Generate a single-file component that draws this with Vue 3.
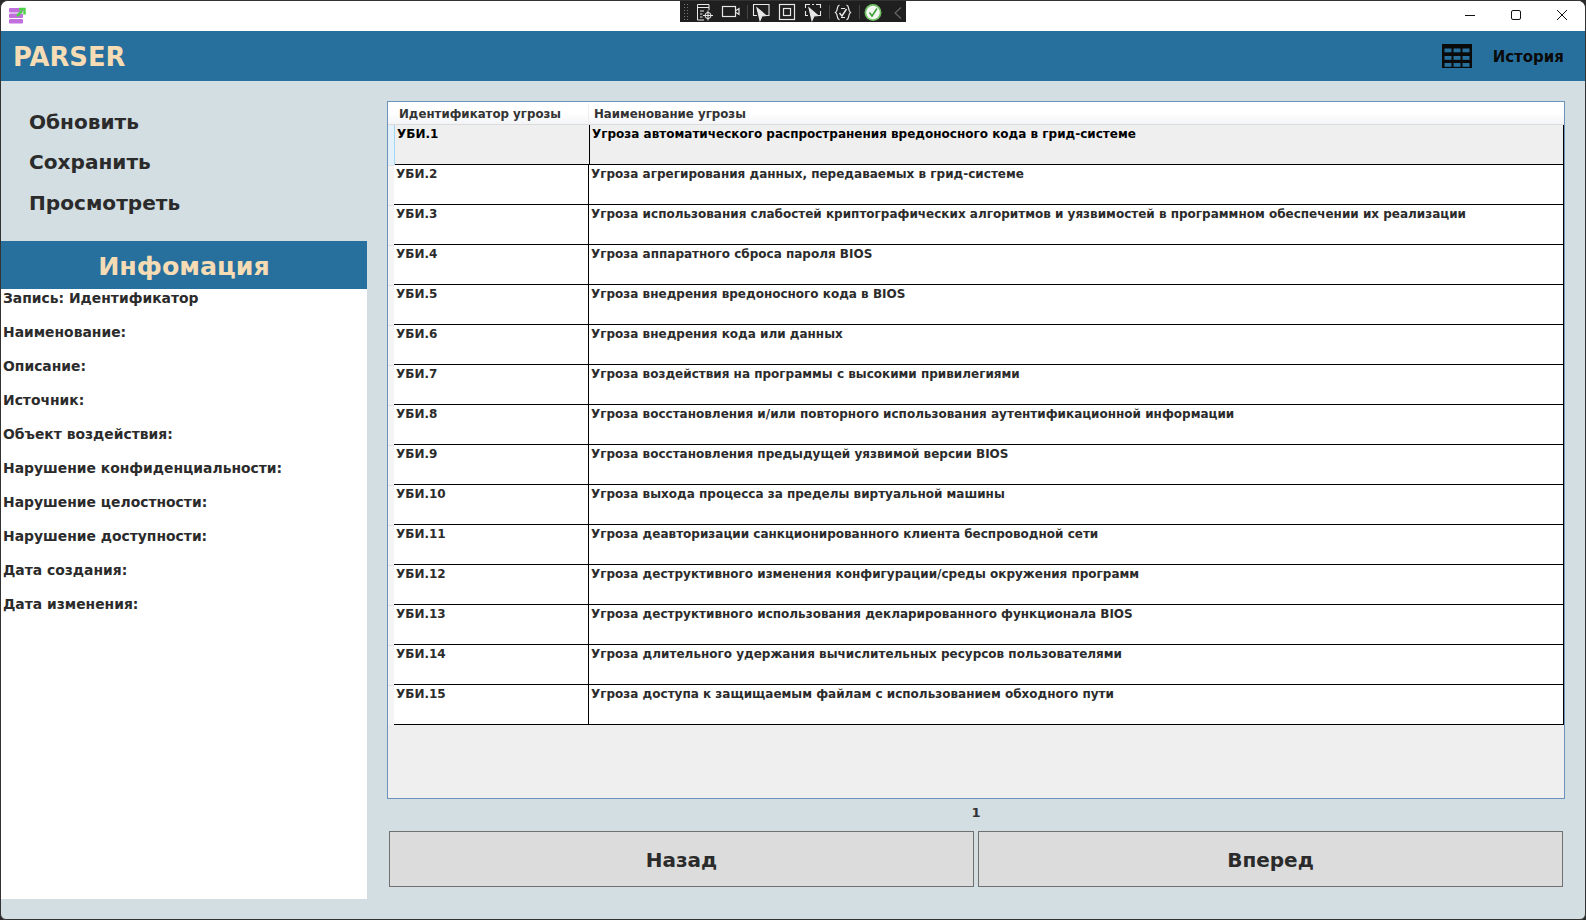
<template>
  <div class="window">
    <div class="titlebar">
      <svg class="app-icon" width="18" height="18" viewBox="0 0 18 18">
        <rect x="0" y="1" width="14" height="4.5" rx="1" fill="#c06fdc" />
        <rect x="0" y="6.500" width="14" height="4.500" rx="1" fill="#c06fdc" />
        <rect x="0" y="12" width="14" height="4.500" rx="1" fill="#c06fdc" />
        <path d="M8 9L13 4M10 2H15.500V7.500" fill="none" stroke="#4fd24a" stroke-width="2.500" />
      </svg>
      <div class="devbar">
        <span class="grip"></span>
        <svg width="20" height="20" viewBox="0 0 20 20" fill="none" stroke="#e8e8e8" stroke-width="1">
          <path d="M10 18H3.500V2.500H15V8" />
          <path d="M3.500 5.500H15M6 9H10M6 12H8.500M6 15H8.500" />
          <circle cx="14" cy="13.500" r="3" />
          <path d="M14 8.500V18.500M9 13.500H19" />
        </svg>
        <svg class="wide" width="21" height="20" viewBox="0 0 21 20" fill="none" stroke="#e8e8e8" stroke-width="1.200">
          <rect x="2.500" y="4.500" width="13" height="10" />
          <path d="M16 8.500L19 6.500V12.500L16 10.500" />
        </svg>
        <i class="sep"></i>
        <svg width="20" height="20" viewBox="0 0 20 20" fill="none" stroke="#e8e8e8" stroke-width="1.100">
          <path d="M6 13.500H2.500V2.500H18V13.500H14" />
          <path d="M6 6L15 13.500L11 14L9 18.500Z" fill="#e8e8e8" />
        </svg>
        <svg width="20" height="20" viewBox="0 0 20 20" fill="none" stroke="#e8e8e8" stroke-width="1.200">
          <rect x="2.500" y="2.500" width="15" height="15" />
          <rect x="6.500" y="6.500" width="7" height="7" />
        </svg>
        <svg width="20" height="20" viewBox="0 0 20 20" fill="none" stroke="#e8e8e8" stroke-width="1.100">
          <path d="M2.500 6V2.500H7M2.500 9V13.500H5M13 2.500H17.500V6M17.500 9V13.500H15M9 2.500H11" />
          <path d="M6 6L15 13.500L11 14L9 18.500Z" fill="#e8e8e8" />
        </svg>
        <i class="sep"></i>
        <svg width="20" height="20" viewBox="0 0 20 20" fill="none" stroke="#e8e8e8" stroke-width="1.200">
          <path d="M6.500 3C3 4 5.500 8.500 2.500 10.500C5.500 12.500 3 17 6.500 18M13.500 3C17 4 14.500 8.500 17.500 10.500C14.500 12.500 17 17 13.500 18" />
          <path d="M6.500 11L9 14L13.500 7" stroke-width="1.500" />
          <path d="M8 6.500H12M8 15.500H12" stroke-width="1" />
        </svg>
        <i class="sep"></i>
        <svg width="20" height="20" viewBox="0 0 20 20">
          <circle cx="10" cy="10.500" r="8.500" fill="#6fbf63" />
          <circle cx="10" cy="10.500" r="6.800" fill="#f4f8f2" />
          <path d="M6.500 10.500L9 14L14 6.500" fill="none" stroke="#3f9f3a" stroke-width="1.600" />
        </svg>
        <svg class="chevron" width="14" height="20" viewBox="0 0 14 20" fill="none" stroke="#666" stroke-width="1.200">
          <path d="M10 5.500L4 11L10 16.500" />
        </svg>
      </div>
      <div class="controls">
        <svg width="12" height="12" viewBox="0 0 12 12"><path d="M1 6.500H11" stroke="#111" /></svg>
        <svg width="12" height="12" viewBox="0 0 12 12" fill="none"><rect x="1.500" y="1.500" width="9" height="9" rx="1.500" stroke="#111" /></svg>
        <svg width="12" height="12" viewBox="0 0 12 12"><path d="M1 1L11 11M11 1L1 11" stroke="#111" /></svg>
      </div>
    </div>

    <header class="topbar">
      <span class="logo">PARSER</span>
      <div class="history">
        <svg width="30" height="24" viewBox="0 0 30 24">
          <rect width="30" height="24" fill="#0a0a0a" />
          <g fill="#27709e">
            <rect v-for="c in gridCells" :key="c.x + '-' + c.y" :x="c.x" :y="c.y" width="7" height="3.800" />
          </g>
        </svg>
        <span>История</span>
      </div>
    </header>

    <main class="body">
      <aside class="side">
        <nav class="menu">
          <a v-for="m in menu" :key="m">{{ m }}</a>
        </nav>
        <h2 class="info-title">Инфомация</h2>
        <div class="info">
          <p v-for="f in fields" :key="f">{{ f }}</p>
        </div>
      </aside>

      <section class="content">
        <div class="table-box">
          <div class="thead">
            <span class="th th-id">Идентификатор угрозы</span>
            <span class="th th-name">Наименование угрозы</span>
          </div>
          <div
            v-for="(row, i) in rows"
            :key="row[0]"
            class="tr"
            :class="{ selected: i === 0 }"
          >
            <span class="gutter"></span>
            <span class="td td-id">{{ row[0] }}</span>
            <span class="td td-name">{{ row[1] }}</span>
          </div>
        </div>
        <div class="page">1</div>
        <div class="buttons">
          <button>Назад</button>
          <button>Вперед</button>
        </div>
      </section>
    </main>
  </div>
</template>

<script setup>
const menu = ['Обновить', 'Сохранить', 'Просмотреть']

const fields = [
  'Запись: Идентификатор',
  'Наименование:',
  'Описание:',
  'Источник:',
  'Объект воздействия:',
  'Нарушение конфиденциальности:',
  'Нарушение целостности:',
  'Нарушение доступности:',
  'Дата создания:',
  'Дата изменения:',
]

const rows = [
  ['УБИ.1', 'Угроза автоматического распространения вредоносного кода в грид-системе'],
  ['УБИ.2', 'Угроза агрегирования данных, передаваемых в грид-системе'],
  ['УБИ.3', 'Угроза использования слабостей криптографических алгоритмов и уязвимостей в программном обеспечении их реализации'],
  ['УБИ.4', 'Угроза аппаратного сброса пароля BIOS'],
  ['УБИ.5', 'Угроза внедрения вредоносного кода в BIOS'],
  ['УБИ.6', 'Угроза внедрения кода или данных'],
  ['УБИ.7', 'Угроза воздействия на программы с высокими привилегиями'],
  ['УБИ.8', 'Угроза восстановления и/или повторного использования аутентификационной информации'],
  ['УБИ.9', 'Угроза восстановления предыдущей уязвимой версии BIOS'],
  ['УБИ.10', 'Угроза выхода процесса за пределы виртуальной машины'],
  ['УБИ.11', 'Угроза деавторизации санкционированного клиента беспроводной сети'],
  ['УБИ.12', 'Угроза деструктивного изменения конфигурации/среды окружения программ'],
  ['УБИ.13', 'Угроза деструктивного использования декларированного функционала BIOS'],
  ['УБИ.14', 'Угроза длительного удержания вычислительных ресурсов пользователями'],
  ['УБИ.15', 'Угроза доступа к защищаемым файлам с использованием обходного пути'],
]

// ячейки иконки таблицы
const gridCells = []
for (const y of [4.5, 12, 19]) {
  for (const x of [2.5, 11.5, 20.5]) {
    gridCells.push({ x, y })
  }
}
</script>

<style>
html, body {
  margin: 0;
  background: #2a2a2a;
}
</style>

<style scoped>
.window {
  width: 1586px;
  height: 920px;
  box-sizing: border-box;
  border: 1px solid #333;
  border-radius: 8px 8px 6px 6px;
  overflow: hidden;
  display: flex;
  flex-direction: column;
  background: #d3dee3;
  font-family: "DejaVu Sans", sans-serif;
  font-weight: bold;
  color: #2b2b2b;
}

.titlebar {
  height: 30px;
  flex: none;
  background: #fff;
  display: flex;
  align-items: center;
  position: relative;
  padding-left: 8px;
}
.app-icon {
  margin-bottom: 1px;
}
.devbar {
  position: absolute;
  left: 679px;
  top: 0;
  width: 226px;
  height: 21px;
  box-sizing: border-box;
  background: #1f1f1f;
  display: flex;
  align-items: center;
  gap: 6px;
  padding-left: 3px;
}
.grip {
  width: 5px;
  height: 17px;
  background: radial-gradient(#777 40%, transparent 45%) 0 0 / 3px 3px;
}
.sep {
  width: 1px;
  height: 14px;
  background: #444;
  margin-right: -3px;
}
.chevron {
  margin-left: 2px;
}
.controls {
  margin-left: auto;
  display: flex;
  gap: 34px;
  padding: 0 17px 2px 0;
}

.topbar {
  height: 50px;
  flex: none;
  background: #27709e;
  display: flex;
  align-items: center;
  justify-content: space-between;
  padding: 0 21px 0 12px;
}
.logo {
  font-size: 25.800px;
  color: #f5dcb4;
  padding-top: 2px;
}
.history {
  display: flex;
  align-items: center;
  gap: 21px;
  font-size: 15px;
  color: #0a0a0a;
}
.history span {
  padding-top: 1px;
}

.body {
  flex: 1;
  display: flex;
  min-height: 0;
}

.side {
  width: 366px;
  flex: none;
  display: flex;
  flex-direction: column;
  margin-bottom: 20px;
}
.menu {
  display: flex;
  flex-direction: column;
  padding: 27px 0 0 28px;
  height: 135px;
  box-sizing: border-box;
  gap: 12.300px;
  margin-bottom: 25px;
  font-size: 20.100px;
  line-height: 28px;
}
.info-title {
  margin: 0;
  height: 48px;
  background: #27709e;
  color: #f5dcb4;
  font-size: 25.300px;
  line-height: 51px;
  text-align: center;
}
.info {
  flex: 1;
  background: #fff;
  padding: 1px 2px 0;
  font-size: 13.900px;
}
.info p {
  margin: 0 0 17px;
  line-height: 17px;
}

.content {
  flex: 1;
  min-width: 0;
  padding: 20px 20px 0;
  display: flex;
  flex-direction: column;
}
.table-box {
  height: 698px;
  box-sizing: border-box;
  border: 1px solid #6b92bd;
  background: #efefef;
  font-size: 12px;
}
.thead {
  height: 20px;
  padding-top: 2px;
  display: flex;
  align-items: center;
  background: linear-gradient(#fff 50%, #f3f4f6);
  border-bottom: 1px solid #dcdcdc;
  color: #333;
}
.th {
  box-sizing: border-box;
  line-height: 20px;
  font-size: 11.800px;
}
.th-id {
  width: 200px;
  padding-left: 11px;
}
.th-name {
  flex: 1;
  padding-left: 5px;
  border-left: 1px solid #eee;
}
.tr {
  height: 40px;
  box-sizing: border-box;
  display: flex;
  color: #2b2b2b;
}
.tr .gutter {
  width: 6px;
  flex: none;
  background: #f4f4f4;
  border-top: 1px solid #e2e2e2;
}
.td {
  background: #fff;
  box-sizing: border-box;
  border-bottom: 1px solid #000;
  line-height: 15px;
  padding: 2px 3px 0;
}
.td-id {
  width: 195px;
  flex: none;
  padding-left: 2px;
  border-right: 1px solid #000;
}
.td-name {
  flex: 1;
  padding-left: 2px;
  border-right: 1px solid #000;
}
.tr.selected .td {
  background: #efefef;
  color: #000;
}
.tr.selected .gutter {
  background: #e3f1fb;
  border-right: 1px solid #a5d5f5;
  border-top: 0;
}

.page {
  height: 32px;
  text-align: center;
  font-size: 13px;
  line-height: 28px;
  color: #333;
}
.buttons {
  display: flex;
  gap: 4px;
  padding: 0 2px;
}
.buttons button {
  flex: 1;
  height: 56px;
  border: 1px solid #707070;
  background: #dcdcdc;
  color: #2b2b2b;
  font: bold 20px "DejaVu Sans", sans-serif;
  padding: 2px 0 0;
}
</style>
